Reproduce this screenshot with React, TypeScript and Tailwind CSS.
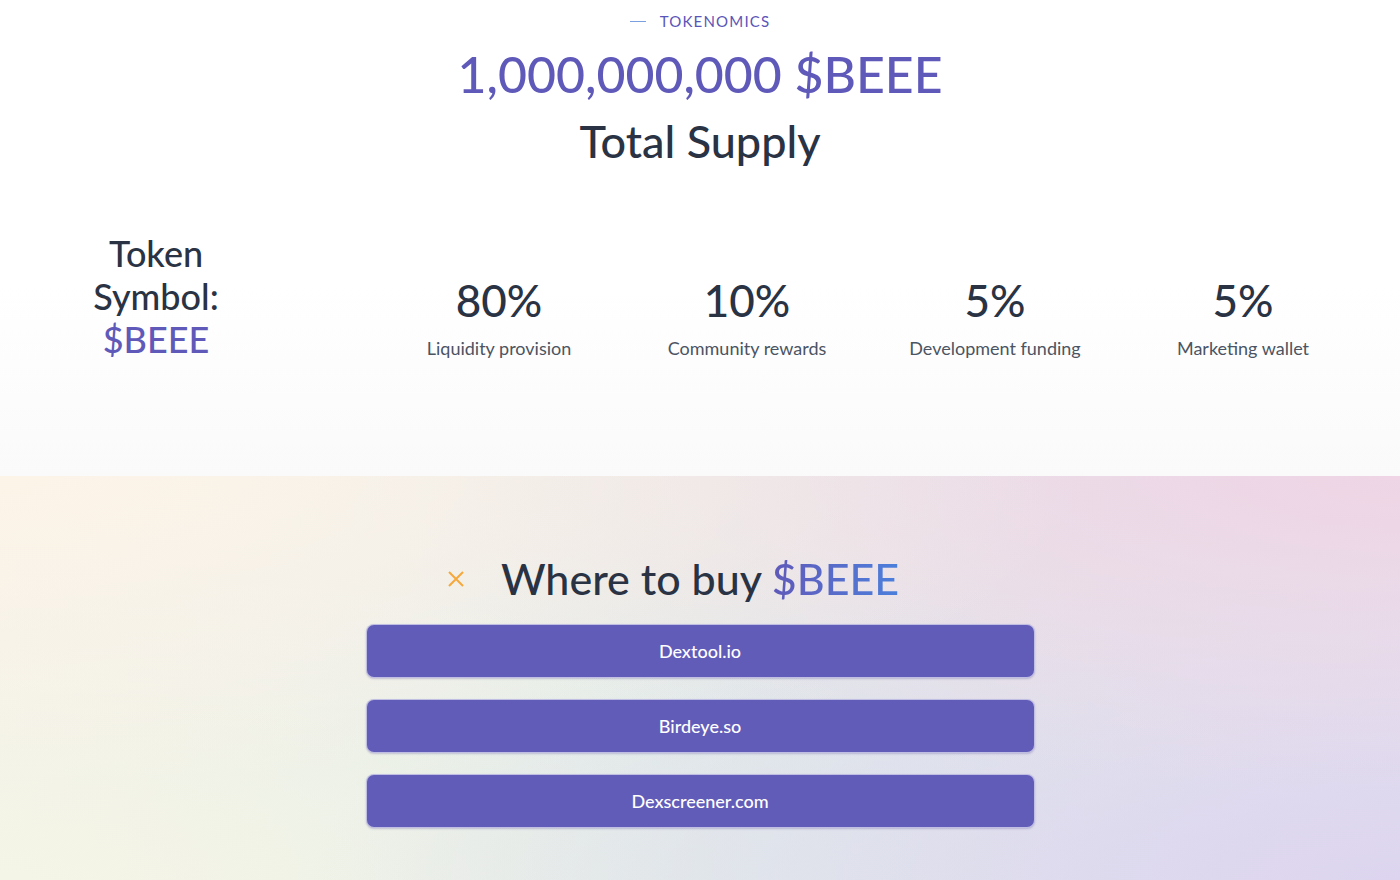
const stats = [
  { value: "80%", label: "Liquidity provision" },
  { value: "10%", label: "Community rewards" },
  { value: "5%", label: "Development funding" },
  { value: "5%", label: "Marketing wallet" },
];

const links = ["Dextool.io", "Birdeye.so", "Dexscreener.com"];

const App = () => {
  return (
    <div className="min-h-screen font-['Lato','Noto_Sans',sans-serif] text-[#2a3344]">
      {/* tokenomics */}
      <section className="h-[476px] bg-gradient-to-b from-white from-60% to-[#fafafa] pt-[11px]">
        <div className="flex items-center justify-center gap-[14px] text-[15px] leading-5 tracking-[0.08em] text-[#5a55b8]">
          <span className="block w-[16px] h-px bg-[#7aa0e0]" />
          <span>TOKENOMICS</span>
        </div>
        <h2 className="mt-[11px] text-center text-[50px] leading-[65px] font-medium text-[#5f59b9]">
          1,000,000,000 $BEEE
        </h2>
        <h3 className="mt-[8px] text-center text-[45px] leading-[53px] font-medium">
          Total Supply
        </h3>

        <div className="mt-[64px] flex">
          <div className="w-[312px] text-center text-[36px] leading-[43px] font-medium">
            <div>Token</div>
            <div>Symbol:</div>
            <div className="text-[#5f59b9]">$BEEE</div>
          </div>
          <div className="ml-[63px] w-[992px] grid grid-cols-4 pt-[40px]">
            {stats.map((s) => (
              <div key={s.label} className="flex flex-col items-center">
                <div className="text-[44px] leading-[56px] font-medium">{s.value}</div>
                <div className="mt-[6px] text-[18px] leading-7 text-[#4b5463]">{s.label}</div>
              </div>
            ))}
          </div>
        </div>
      </section>

      {/* where to buy */}
      <section className="min-h-[404px] pt-[75px] pb-[52px] bg-[radial-gradient(ellipse_at_top_left,#fdf4e8,transparent_55%),radial-gradient(ellipse_at_top_right,#efd5e5,transparent_55%),radial-gradient(ellipse_at_bottom_right,#ddd5ef,transparent_55%),radial-gradient(ellipse_at_bottom_left,#f4f5e6,transparent_55%),radial-gradient(ellipse_at_bottom,#d9ebea,transparent_60%),linear-gradient(to_right,#f2f1ea,#e6ebe9,#e2e2ee)]">
        <div className="flex justify-center">
          <h2 className="relative text-[43px] leading-[55px] font-medium">
            <svg
              className="absolute left-[-54px] top-[19px]"
              width="18"
              height="18"
              viewBox="0 0 18 18"
              fill="none"
              stroke="#f6a93b"
              strokeWidth="2"
            >
              <path d="M2 2L16 16M16 2L2 16" />
            </svg>
            Where to buy{" "}
            <span className="bg-gradient-to-r from-[#5f59b9] to-[#4a7fdc] bg-clip-text text-transparent">
              $BEEE
            </span>
          </h2>
        </div>
        <div className="mx-auto mt-[18px] w-[669px] flex flex-col gap-[21px]">
          {links.map((l) => (
            <a
              key={l}
              href="#"
              className="h-[54px] flex items-center justify-center rounded-lg border border-[#ffffff99] bg-[#625cb9] text-white text-[18px] font-medium shadow-[0_1px_2px_rgba(60,50,140,0.25)]"
            >
              {l}
            </a>
          ))}
        </div>
      </section>
    </div>
  );
};

export default App;
